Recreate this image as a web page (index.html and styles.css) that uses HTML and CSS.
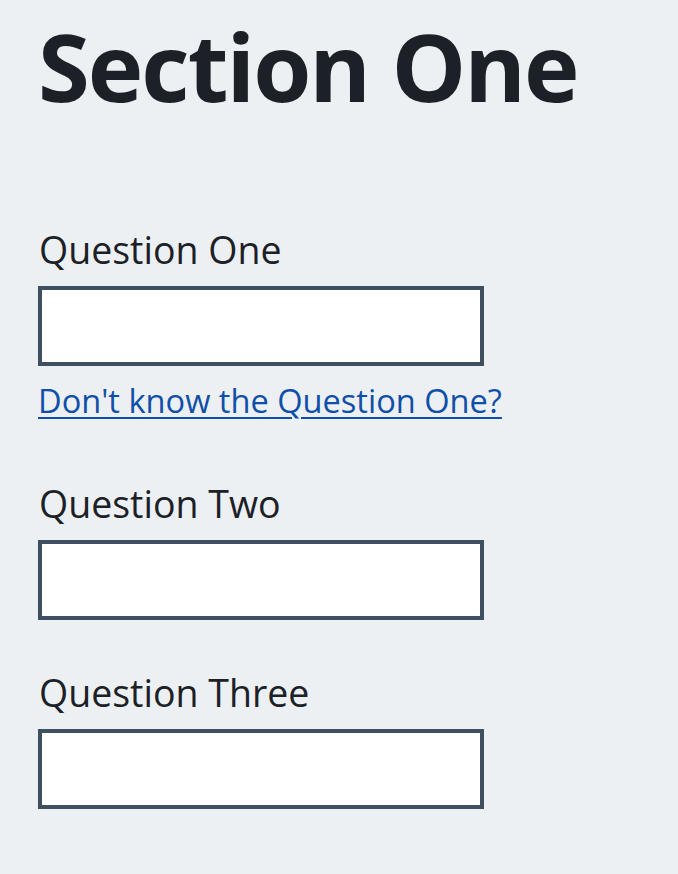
FILE: index.html
```html
<!DOCTYPE html>
<html lang="en">
<head>
<meta charset="utf-8">
<title>Section One</title>
<link rel="stylesheet" href="styles.css">
</head>
<body>
<main class="page">
  <h1 class="title">Section One</h1>
  <div class="field field-first">
    <label class="label" for="q1">Question One</label>
    <input class="input" id="q1" type="text">
    <a class="help-link" href="#">Don't know the Question One?</a>
  </div>
  <div class="field">
    <label class="label" for="q2">Question Two</label>
    <input class="input" id="q2" type="text">
  </div>
  <div class="field">
    <label class="label" for="q3">Question Three</label>
    <input class="input" id="q3" type="text">
  </div>
</main>
</body>
</html>
```

FILE: styles.css
```css
html, body {
  margin: 0;
  padding: 0;
  background: #ecf0f3;
}

body {
  font-family: "Open Sans", "Noto Sans", sans-serif;
  color: #1b2126;
}

.page {
  padding: 18px 0 0 38px;
}

.title {
  margin: 0 0 112px;
  font-size: 94px;
  line-height: 96px;
  font-weight: 700;
  letter-spacing: -2px;
  color: #1b2126;
}

.field {
  display: flex;
  flex-direction: column;
  align-items: flex-start;
  margin-bottom: 49px;
}

.field-first {
  margin-bottom: 59px;
}

.label {
  display: block;
  font-size: 37.5px;
  line-height: 48px;
  font-weight: 400;
  margin-left: 1px;
}

.input {
  box-sizing: border-box;
  display: block;
  width: 446px;
  height: 80px;
  margin: 12px 0 0;
  padding: 0 8px;
  border: 4px solid #3e5060;
  border-radius: 0;
  background: #ffffff;
  font: inherit;
  font-size: 38px;
  outline: none;
}

.help-link {
  display: block;
  margin-top: 15px;
  font-size: 32.6px;
  line-height: 40px;
  color: #0f4fa8;
  text-decoration: underline;
  text-decoration-thickness: 2px;
  text-underline-offset: 4px;
}
```
